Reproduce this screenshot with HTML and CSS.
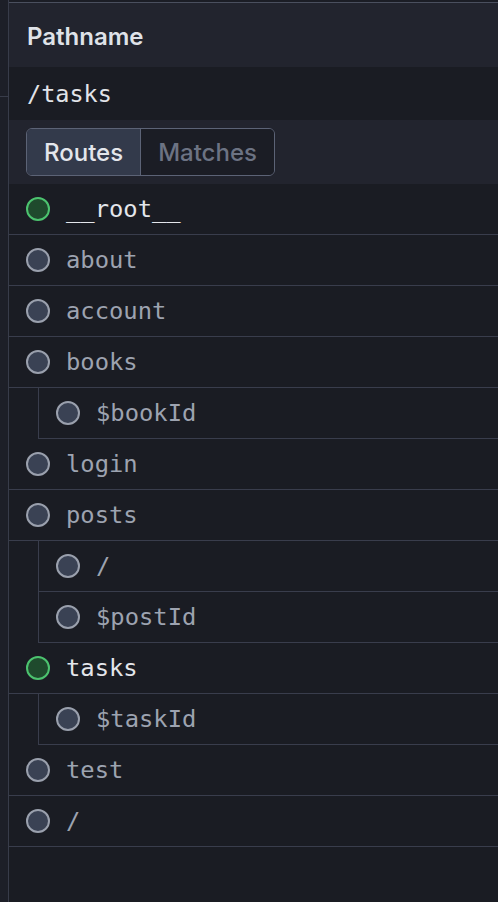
FILE: index.html
```html
<!DOCTYPE html>
<html>
<head>
<meta charset="utf-8">
<link rel="stylesheet" href="styles.css">
</head>
<body>
<div class="app">
  <div class="gutter"><div class="gutter-top"></div></div>
  <div class="panel">
    <div class="panel-head">Pathname</div>
    <div class="path-row">/tasks</div>
    <div class="tabs-row">
      <div class="tabs">
        <div class="tab active">Routes</div>
        <div class="tab">Matches</div>
      </div>
    </div>
    <div class="routes">
      <div class="row on"><span class="dot"></span><span class="name">__root__</span></div>
      <div class="row"><span class="dot"></span><span class="name">about</span></div>
      <div class="row"><span class="dot"></span><span class="name">account</span></div>
      <div class="row"><span class="dot"></span><span class="name">books</span></div>
      <div class="children">
        <div class="row"><span class="dot"></span><span class="name">$bookId</span></div>
      </div>
      <div class="row"><span class="dot"></span><span class="name">login</span></div>
      <div class="row"><span class="dot"></span><span class="name">posts</span></div>
      <div class="children">
        <div class="row"><span class="dot"></span><span class="name">/</span></div>
        <div class="row"><span class="dot"></span><span class="name">$postId</span></div>
      </div>
      <div class="row on"><span class="dot"></span><span class="name">tasks</span></div>
      <div class="children">
        <div class="row"><span class="dot"></span><span class="name">$taskId</span></div>
      </div>
      <div class="row"><span class="dot"></span><span class="name">test</span></div>
      <div class="row"><span class="dot"></span><span class="name">/</span></div>
    </div>
  </div>
</div>
</body>
</html>
```

FILE: styles.css
```css
html, body {
  margin: 0;
  padding: 0;
  background: #1b1d25;
  height: 100%;
}
.app {
  display: flex;
  min-height: 902px;
  background: #1b1d25;
}
.gutter {
  width: 8px;
  flex: none;
  background: #1d1f28;
  border-right: 1px solid #383c4a;
}
.gutter-top {
  height: 96px;
  border-bottom: 1px solid #383c4a;
}
.panel {
  flex: 1;
  display: flex;
  flex-direction: column;
  padding-top: 2px;
  background: #1b1d25;
}
.panel-head {
  border-top: 1px solid #4a4f5e;
  height: 65px;
  box-sizing: border-box;
  background: #22242e;
  display: flex;
  align-items: center;
  padding: 3px 0 0 18px;
  font-family: Inter, "Noto Sans", sans-serif;
  font-weight: 600;
  font-size: 24px;
  color: #dfe2e8;
}
.path-row {
  height: 53px;
  background: #1a1c23;
  display: flex;
  align-items: center;
  padding-left: 18px;
  font-family: "DejaVu Sans Mono", monospace;
  font-size: 23.5px;
  color: #e2e4e9;
}
.tabs-row {
  height: 64px;
  box-sizing: border-box;
  background: #22242e;
  padding: 8px 0 8px 17px;
  display: flex;
}
.tabs {
  display: flex;
  border: 1px solid #5c6376;
  border-radius: 6px;
  overflow: hidden;
  height: 48px;
  box-sizing: border-box;
}
.tab {
  display: flex;
  align-items: center;
  padding: 0 17px;
  font-family: Inter, "Noto Sans", sans-serif;
  font-weight: 500;
  font-size: 24px;
  color: #6c7383;
  background: #1b1d25;
}
.tab.active {
  background: #333a4b;
  color: #e4e6eb;
  border-right: 1px solid #5c6376;
  padding: 0 17px 0 17px;
}
.routes {
  background: #1a1c23;
  flex: 1;
}
.row {
  display: flex;
  align-items: center;
  height: 50px;
  padding-left: 17px;
  gap: 16px;
  border-bottom: 1px solid #393d4c;
  font-family: "DejaVu Sans Mono", monospace;
  font-size: 23.8px;
  color: #9da3b0;
}
.dot {
  width: 20px;
  height: 20px;
  border: 2px solid #9aa0ad;
  background: #3a4254;
  border-radius: 50%;
  flex: none;
}
.row.on {
  color: #e4e6eb;
}
.row.on .dot {
  border-color: #4cc36f;
  background: #1f4a2d;
}
.children {
  margin-left: 29px;
  border-left: 1px solid #393d4c;
}
```
